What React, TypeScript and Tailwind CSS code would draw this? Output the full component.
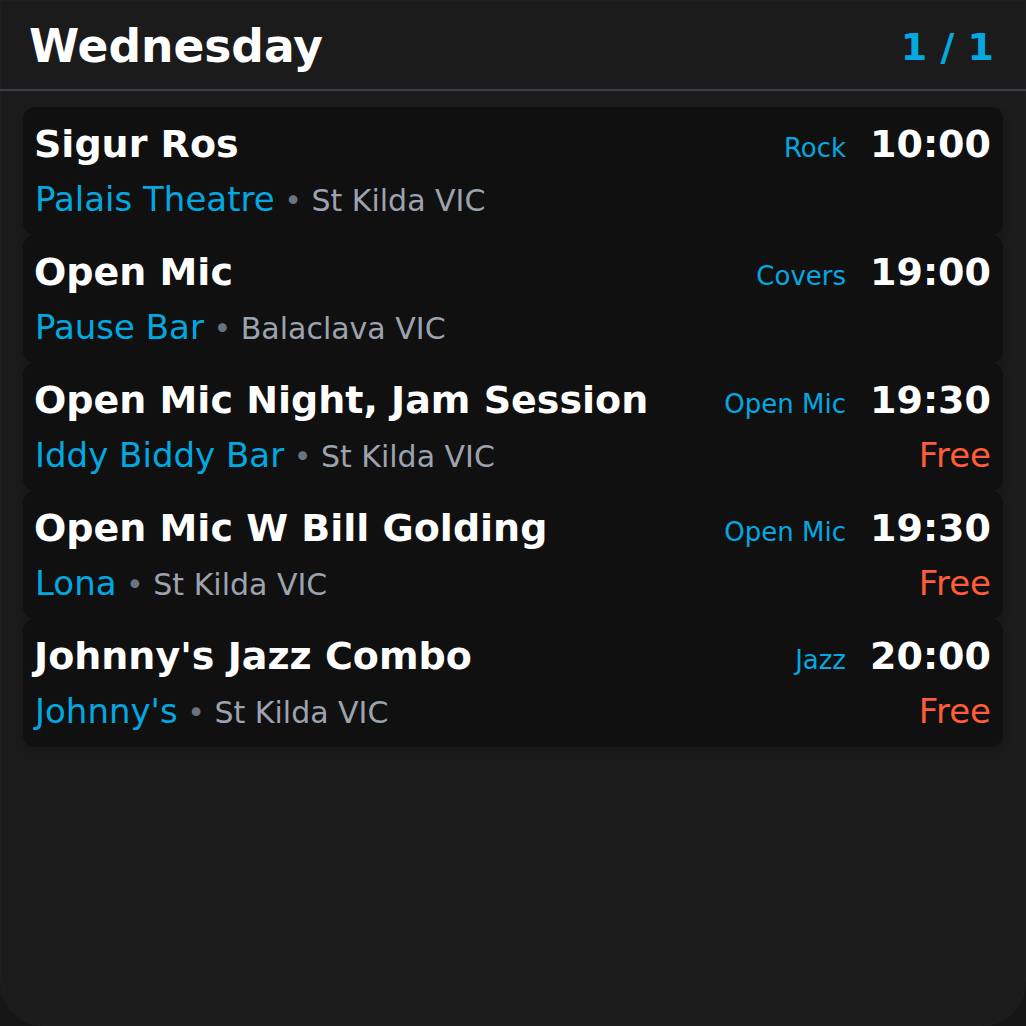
import React from "react";

type Gig = {
  title: string;
  venue: string;
  location: string;
  genre: string;
  time: string;
  free?: boolean;
};

const gigs: Gig[] = [
  { title: "Sigur Ros", venue: "Palais Theatre", location: "St Kilda VIC", genre: "Rock", time: "10:00" },
  { title: "Open Mic", venue: "Pause Bar", location: "Balaclava VIC", genre: "Covers", time: "19:00" },
  { title: "Open Mic Night, Jam Session", venue: "Iddy Biddy Bar", location: "St Kilda VIC", genre: "Open Mic", time: "19:30", free: true },
  { title: "Open Mic W Bill Golding", venue: "Lona", location: "St Kilda VIC", genre: "Open Mic", time: "19:30", free: true },
  { title: "Johnny's Jazz Combo", venue: "Johnny's", location: "St Kilda VIC", genre: "Jazz", time: "20:00", free: true },
];

function Card({ g }: { g: Gig }) {
  return (
    <div className="h-[128px] rounded-[12px] bg-[#101010] pl-[11px] pr-3 pt-[15px] shadow-[0_4px_10px_rgba(0,0,0,0.18)]">
      <div className="flex items-baseline justify-between">
        <div className="text-[38px] leading-[44px] font-bold text-white whitespace-nowrap">{g.title}</div>
        <div className="flex items-baseline gap-6">
          <span className="text-[26px] leading-[44px] text-[#03a8e0]">{g.genre}</span>
          <span className="text-[38px] leading-[44px] font-bold text-white">{g.time}</span>
        </div>
      </div>
      <div className="mt-[9px] flex items-baseline justify-between text-[34px] leading-[40px]">
        <div className="whitespace-nowrap pl-px">
          <span className="text-[#03a8e0]">{g.venue}</span>
          <span className="text-[30px] text-[#6b7280]"> • </span>
          <span className="text-[30px] text-[#9ca3af]">{g.location}</span>
        </div>
        {g.free && <span className="text-[#ff5c39]">Free</span>}
      </div>
    </div>
  );
}

export default function App() {
  return (
    <div className="w-[1026px] h-[1026px] bg-[#161616] overflow-hidden" style={{ fontFamily: '"DejaVu Sans", sans-serif' }}>
      <div className="h-full w-full bg-[#1b1b1b] rounded-b-[44px] shadow-[inset_0_0_0_1px_rgba(255,255,255,0.02)] flex flex-col">
        <div className="h-[91px] pt-1 pl-[29px] pr-8 flex items-center justify-between border-b-2 border-[#3a3f4a]">
          <div className="text-[45.5px] font-bold text-white leading-none">Wednesday</div>
          <div className="text-[38px] font-bold text-[#03a8e0] leading-none">1 / 1</div>
        </div>
        <div className="px-[23px] pt-4 flex flex-col">
          {gigs.map((g, i) => (
            <Card key={i} g={g} />
          ))}
        </div>
      </div>
    </div>
  );
}
